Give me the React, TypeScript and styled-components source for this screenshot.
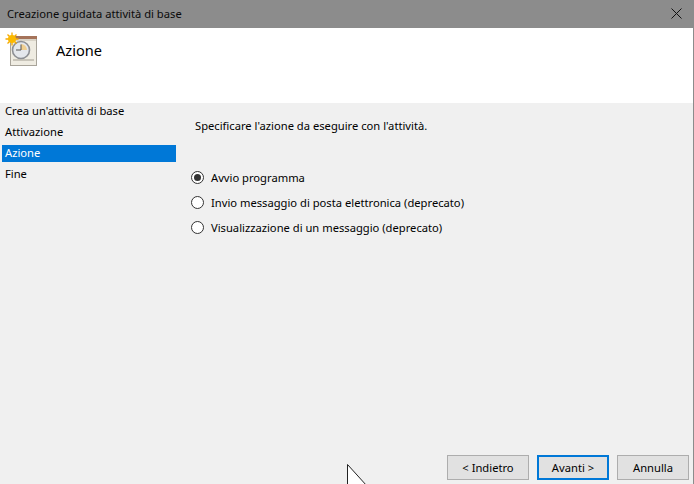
import React from "react";
import styled, { createGlobalStyle } from "styled-components";

const Global = createGlobalStyle`
  html, body { margin: 0; padding: 0; background: #f0f0f0; overflow: hidden; }
  #root { width: 694px; height: 484px; }
`;

const Win = styled.div`
  position: relative;
  box-sizing: border-box;
  width: 694px;
  height: 484px;
  display: flex;
  flex-direction: column;
  background: #f0f0f0;
  border-right: 1px solid #8c8c8c;
  font-family: "Noto Sans", "Open Sans", sans-serif;
  font-size: 11.2px;
  color: #000;
  overflow: hidden;
`;
const TitleBar = styled.div`
  height: 28px;
  flex: none;
  background: #8c8c8c;
  display: flex;
  align-items: center;
  justify-content: space-between;
  padding: 0 11px 2px 7px;
  box-sizing: border-box;
  color: #0a0a0a;
`;
const Header = styled.div`
  height: 75px;
  flex: none;
  background: #fff;
  display: flex;
  align-items: flex-start;
  padding: 4px 0 0 4px;
  box-sizing: border-box;
`;
const Heading = styled.div`
  font-size: 14.6px;
  margin: 8px 0 0 18px;
  line-height: 20px;
`;
const Body = styled.div`
  flex: 1;
  display: flex;
  min-height: 0;
`;
const Side = styled.div`
  width: 174px;
  flex: none;
  margin: 0 0 0 2px;
  display: flex;
  flex-direction: column;
  gap: 4px;
`;
const Step = styled.div<{ $active?: boolean }>`
  height: 17px;
  line-height: 16px;
  padding-left: 3px;
  background: ${(p) => (p.$active ? "#0078d7" : "transparent")};
  color: ${(p) => (p.$active ? "#fff" : "#000")};
`;
const Main = styled.div`
  flex: 1;
  display: flex;
  flex-direction: column;
  padding: 15px 4px 4px 15px;
  min-width: 0;
`;
const Prompt = styled.div`
  line-height: 16px;
  padding-left: 4px;
`;
const Options = styled.div`
  display: flex;
  flex-direction: column;
  gap: 9px;
  margin-top: 35px;
`;
const Option = styled.label`
  display: flex;
  align-items: center;
  height: 16px;
  gap: 7px;
`;
const Radio = styled.span<{ $on?: boolean }>`
  width: 13px;
  height: 13px;
  box-sizing: border-box;
  border: 1px solid #333;
  border-radius: 50%;
  background: #fff;
  display: flex;
  align-items: center;
  justify-content: center;
  &::after {
    content: "";
    width: 7px;
    height: 7px;
    border-radius: 50%;
    background: ${(p) => (p.$on ? "#333" : "transparent")};
  }
`;
const Footer = styled.div`
  margin-top: auto;
  display: flex;
  justify-content: flex-end;
  gap: 8px;
`;
const Btn = styled.button<{ $w: number; $primary?: boolean }>`
  width: ${(p) => p.$w}px;
  height: 25px;
  box-sizing: border-box;
  background: #e1e1e1;
  border: ${(p) => (p.$primary ? "2px solid #0078d7" : "1px solid #adadad")};
  font: inherit;
  color: #000;
  padding: 0;
`;
const CursorMark = styled.svg`
  position: absolute;
  left: 347px;
  top: 464px;
`;

const TaskIcon = () => (
  <svg width="34" height="34" viewBox="0 0 34 34">
    <rect x="6.5" y="6.5" width="26" height="27" fill="#efece2" stroke="#a8a49a" />
    <rect x="9" y="4" width="24" height="3" fill="#a5735a" />
    <rect x="6" y="7" width="26" height="2" fill="#d9d4c8" />
    <rect x="9" y="27" width="21" height="2" fill="#c9c5ba" />
    <circle cx="17" cy="18" r="8.5" fill="#e4e7ec" stroke="#8d8f94" strokeWidth="1.6" />
    <path d="M17 18V12A6 6 0 0 1 23 18Z" fill="#f0cf90" />
    <path d="M17 12.5V18H12" fill="none" stroke="#555" strokeWidth="1" />
    <g stroke="#f5a800" strokeWidth="1.3">
      <path d="M8 0.5v13M1.5 7h13M3.5 2.5l9 9M12.5 2.5l-9 9" />
    </g>
    <circle cx="8" cy="7" r="4" fill="#fbb900" />
  </svg>
);

export default function App() {
  return (
    <Win>
      <Global />
      <TitleBar>
        <span>Creazione guidata attività di base</span>
        <svg width="11" height="11" viewBox="0 0 11 11">
          <path d="M.5.5l10 10M10.5.5l-10 10" stroke="#111" strokeWidth="1" fill="none" />
        </svg>
      </TitleBar>
      <Header>
        <TaskIcon />
        <Heading>Azione</Heading>
      </Header>
      <Body>
        <Side>
          <Step>Crea un'attività di base</Step>
          <Step>Attivazione</Step>
          <Step $active>Azione</Step>
          <Step>Fine</Step>
        </Side>
        <Main>
          <Prompt>Specificare l'azione da eseguire con l'attività.</Prompt>
          <Options>
            <Option><Radio $on />Avvio programma</Option>
            <Option><Radio />Invio messaggio di posta elettronica (deprecato)</Option>
            <Option><Radio />Visualizzazione di un messaggio (deprecato)</Option>
          </Options>
          <Footer>
            <Btn $w={82}>&lt; Indietro</Btn>
            <Btn $w={72} $primary>Avanti &gt;</Btn>
            <Btn $w={72}>Annulla</Btn>
          </Footer>
        </Main>
      </Body>
      <CursorMark width="20" height="22" viewBox="0 0 20 22">
        <path d="M.5.5V22H20Z" fill="#fff" stroke="#222" strokeWidth="1" />
      </CursorMark>
    </Win>
  );
}
